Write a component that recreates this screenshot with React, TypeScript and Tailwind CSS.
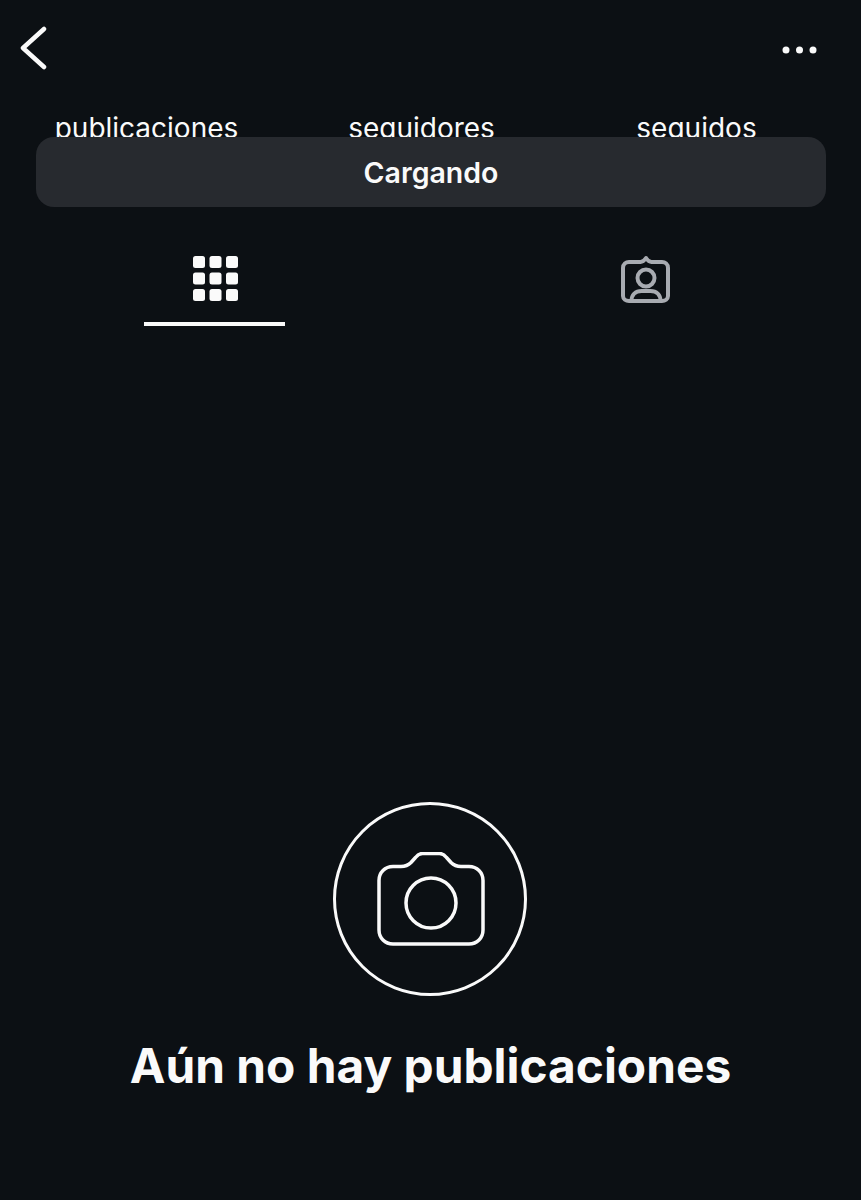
const stats = ['publicaciones', 'seguidores', 'seguidos']

function GridIcon() {
  const cells = [0, 16.5, 33]
  return (
    <svg width="45" height="45" viewBox="0 0 45 45" fill="#fafafa" className="ml-[2px]">
      {cells.map((y) =>
        cells.map((x) => <rect key={`${x}-${y}`} x={x} y={y} width="12" height="12" rx="2.5" />),
      )}
    </svg>
  )
}

function TaggedIcon() {
  return (
    <svg width="50" height="50" viewBox="0 0 50 50" fill="none" stroke="#a8abb1" strokeWidth="4" strokeLinecap="round" strokeLinejoin="round" className="-mt-[1px]">
      <path d="M8 7h11.500c2 0 3.500-1 5.500-4 2 3 3.500 4 5.500 4H41c3 0 6 2 6 6v28c0 3-3 5-6 5H8c-3 0-6-2-6-5V13c0-4 3-6 6-6z" />
      <circle cx="25" cy="23" r="8.500" />
      <path d="M10.500 46c0-6 4-10 10-10h9c6 0 10 4 10 10" />
    </svg>
  )
}

function CameraIcon() {
  return (
    <svg width="108" height="94" viewBox="0 0 108 94" fill="none" stroke="#fafafa" strokeWidth="3.500" strokeLinejoin="round" className="ml-[2px]">
      <path d="M16 14.500h8c4 0 7-1 10-4l4.500-5c2-2.500 4-4 7-4h17c3 0 5 1.500 7 4l4.500 5c3 3 6 4 10 4h8c8 0 14 6 14 14V78c0 8-6 14-14 14H16C8 92 2 86 2 78V28.500c0-8 6-14 14-14z" />
      <circle cx="54" cy="51" r="25" />
    </svg>
  )
}

export default function App() {
  return (
    <div className="h-[1200px] overflow-hidden bg-[#0c1014] font-['Inter',sans-serif] text-[#fafafa]">
      <header className="flex h-[96px] items-center justify-between pl-[20px] pr-[44px]">
        <svg width="28" height="44" viewBox="0 0 28 44" fill="none" stroke="#fafafa" strokeWidth="4.500" strokeLinecap="round" strokeLinejoin="round">
          <path d="M24 3 3 22l21 19" />
        </svg>
        <svg width="35" height="8" viewBox="0 0 35 8" fill="#fafafa" className="mt-[4px]">
          <circle cx="4" cy="4" r="3.500" />
          <circle cx="17.500" cy="4" r="3.500" />
          <circle cx="31" cy="4" r="3.500" />
        </svg>
      </header>

      <div className="grid h-[41px] grid-cols-3 overflow-hidden pl-[9px] pr-[27px]">
        {stats.map((s) => (
          <div key={s} className="pt-[15px] text-center text-[28px] leading-[34px] whitespace-nowrap">
            {s}
          </div>
        ))}
      </div>

      <div className="ml-[36px] mr-[35px] flex h-[70px] items-center justify-center rounded-[18px] bg-[#272a2f] pt-[2px] text-[28.500px] font-semibold">
        Cargando
      </div>

      <div className="mt-[49px] grid grid-cols-2">
        <div className="flex flex-col items-center pr-[2px]">
          <GridIcon />
          <div className="mt-[21px] h-[4px] w-[141px] bg-[#fafafa]" />
        </div>
        <div className="flex justify-center">
          <TaggedIcon />
        </div>
      </div>

      <div className="mt-[476px] flex flex-col items-center">
        <div className="mr-[1px] flex h-[194px] w-[194px] items-center justify-center rounded-full border-[3px] border-[#fafafa]">
          <CameraIcon />
        </div>
        <h1 className="mt-[38px] text-[47.800px] leading-[64px] font-bold">Aún no hay publicaciones</h1>
      </div>
    </div>
  )
}
